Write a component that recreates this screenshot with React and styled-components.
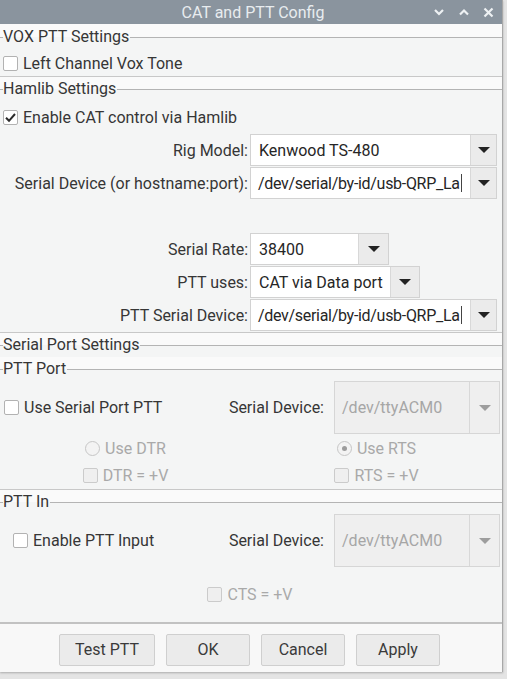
import React from 'react'
import styled, { createGlobalStyle } from 'styled-components'

const GlobalStyle = createGlobalStyle`
  html, body {
    margin: 0;
    padding: 0;
    background: #e2e2e2;
  }
  body {
    font-family: Roboto, "Liberation Sans", sans-serif;
    font-size: 16px;
    color: #363636;
  }
`

const Desktop = styled.div`
  width: 507px;
  height: 679px;
  overflow: hidden;
  display: flex;
  flex-direction: column;
  background: #e4e4e4;
`

const Window = styled.div`
  width: 502px;
  height: 672px;
  flex: none;
  display: flex;
  flex-direction: column;
  background: #f7f7f7;
  border-right: 1px solid #a8a8a8;
  box-shadow: 0 1px 2px rgba(0, 0, 0, 0.25);
`

const TitleBar = styled.div`
  height: 24px;
  flex: none;
  display: grid;
  grid-template-columns: 1fr auto 1fr;
  align-items: center;
  background: #8a949e;
  color: #e8ecef;
`

const Title = styled.div`
  grid-column: 2;
  font-size: 16px;
  padding-left: 4px;
`

const Controls = styled.div`
  grid-column: 3;
  justify-self: end;
  display: flex;
  align-items: center;
  gap: 13px;
  padding-right: 8px;
`

const ScrollArea = styled.div`
  height: 598px;
  flex: none;
  display: flex;
  flex-direction: column;
  background: #fafafa;
  border-bottom: 2px solid #c2c2c2;
  overflow: hidden;
`

const Group = styled.section`
  display: flex;
  flex-direction: column;
  background: #f4f5f5;
  border-bottom: ${p => (p.$open ? 'none' : '1px solid #c8c8c8')};
  flex: ${p => (p.$grow ? 1 : 'none')};
`

const GroupTitle = styled.div`
  height: ${p => p.$h || 24}px;
  display: flex;
  align-items: center;
  background: linear-gradient(to bottom, #fafafa 50%, #f4f5f5 50%);
  &::before {
    content: '';
    width: 3px;
    height: 1px;
    background: #b4b4b4;
  }
  &::after {
    content: '';
    flex: 1;
    height: 1px;
    background: #b4b4b4;
  }
  span {
    padding: 0 1px 0 0;
    line-height: 1;
  }
`

const Row = styled.div`
  height: ${p => p.$h}px;
  display: flex;
  align-items: center;
  padding-left: ${p => p.$pl || 0}px;
  padding-right: ${p => p.$pr || 0}px;
`

const Halves = styled.div`
  height: ${p => p.$h}px;
  display: grid;
  grid-template-columns: 1fr 1fr;
  align-items: center;
  justify-items: center;
`

const Centered = styled.div`
  flex: 1;
  display: flex;
  align-items: center;
  justify-content: center;
  padding-right: 2px;
`

const Check = styled.label`
  display: inline-flex;
  align-items: center;
  gap: 5px;
  color: ${p => (p.$disabled ? '#a9a9a9' : '#363636')};
  white-space: nowrap;
`

const Box = styled.span`
  width: 13px;
  height: 13px;
  border: 1px solid ${p => (p.$disabled ? '#cbcbcb' : '#b2b2b2')};
  background: ${p => (p.$disabled ? '#efefef' : '#ffffff')};
  border-radius: 2px;
  display: inline-flex;
  align-items: center;
  justify-content: center;
  box-sizing: content-box;
`

const Radio = styled.span`
  width: 13px;
  height: 13px;
  border: 1px solid #c6c6c6;
  border-radius: 50%;
  background: #f3f3f3;
  display: inline-flex;
  align-items: center;
  justify-content: center;
  &::after {
    content: '';
    width: 5px;
    height: 5px;
    border-radius: 50%;
    background: ${p => (p.$checked ? '#9c9c9c' : 'transparent')};
  }
`

const FormGrid = styled.div`
  display: grid;
  grid-template-columns: 248px 1fr;
  grid-auto-rows: 32px;
  column-gap: 2px;
  row-gap: 1px;
  padding-bottom: 1px;
`

const FieldLabel = styled.div`
  justify-self: end;
  align-self: center;
  white-space: nowrap;
`

const Spacer = styled.div`
  flex: 1;
`

const SideLabel = styled.div`
  margin-right: 10px;
  white-space: nowrap;
`

const Combo = styled.div`
  width: ${p => p.$w}px;
  height: ${p => p.$h || 32}px;
  box-sizing: border-box;
  display: flex;
  border: 1px solid ${p => (p.$disabled ? '#d6d6d6' : '#d2d2d2')};
  background: ${p => (p.$disabled ? '#efefef' : '#ffffff')};
  color: ${p => (p.$disabled ? '#a6a6a6' : '#262626')};
`

const ComboText = styled.div`
  flex: 1;
  min-width: 0;
  display: flex;
  align-items: center;
  padding-left: ${p => p.$pl || 8}px;
  white-space: nowrap;
  overflow: hidden;
`

const Path = styled.span`
  letter-spacing: -0.3px;
`

const Caret = styled.span`
  width: 1px;
  height: 18px;
  background: #444;
  margin-left: 1px;
`

const ComboButton = styled.div`
  width: ${p => p.$w || 24}px;
  flex: none;
  display: flex;
  align-items: center;
  justify-content: center;
  background: ${p => (p.$disabled ? '#efefef' : '#ebebeb')};
  border-left: 1px solid #d8d8d8;
  &::after {
    content: '';
    border-left: 6px solid transparent;
    border-right: 6px solid transparent;
    border-top: 6px solid ${p => (p.$disabled ? '#9d9d9d' : '#222222')};
  }
`

const ButtonBar = styled.div`
  flex: 1;
  display: flex;
  justify-content: center;
  align-items: flex-start;
  gap: 11px;
  padding-top: 10px;
  padding-right: 3px;
  background: #f8f8f8;
`

const Button = styled.button`
  width: ${p => p.$w || 84}px;
  height: 32px;
  background: #ebebeb;
  border: 1px solid #cfcfcf;
  border-radius: 2px;
  font-family: inherit;
  font-size: 16px;
  color: #3a3a3a;
  padding: 0 0 1px;
`

const Chevron = ({ up }) => (
  <svg width='12' height='8' viewBox='0 0 12 8'>
    <path d={up ? 'M2 6.5 L6 2.5 L10 6.5' : 'M2 2 L6 6 L10 2'} fill='none' stroke='#eef1f3' strokeWidth='2.2' />
  </svg>
)

const Close = () => (
  <svg width='11' height='11' viewBox='0 0 11 11'>
    <path d='M1.5 1.5 L9.5 9.5 M9.5 1.5 L1.5 9.5' stroke='#eef1f3' strokeWidth='2.2' />
  </svg>
)

const CheckMark = () => (
  <svg width='13' height='13' viewBox='0 0 13 13'>
    <path d='M2 6.8 L5 9.8 L11 3' fill='none' stroke='#2a2a2a' strokeWidth='2' />
  </svg>
)

const CheckItem = ({ label, checked, disabled }) => (
  <Check $disabled={disabled}>
    <Box $disabled={disabled}>{checked && <CheckMark />}</Box>
    <span>{label}</span>
  </Check>
)

const RadioItem = ({ label, checked }) => (
  <Check $disabled>
    <Radio $checked={checked} />
    <span>{label}</span>
  </Check>
)

const ComboBox = ({ value, w, h, disabled, editable, btn, pl }) => (
  <Combo $w={w} $h={h} $disabled={disabled}>
    <ComboText $pl={pl}>
      {editable ? <><Path>{value}</Path><Caret /></> : value}
    </ComboText>
    <ComboButton $w={btn} $disabled={disabled} />
  </Combo>
)

export default function App () {
  return (
    <Desktop>
      <GlobalStyle />
      <Window>
        <TitleBar>
          <Title>CAT and PTT Config</Title>
          <Controls>
            <Chevron />
            <Chevron up />
            <Close />
          </Controls>
        </TitleBar>
        <ScrollArea>
          <Group>
            <GroupTitle $h={26}><span>VOX PTT Settings</span></GroupTitle>
            <Row $h={26} $pl={3}>
              <CheckItem label='Left Channel Vox Tone' />
            </Row>
          </Group>

          <Group>
            <GroupTitle><span>Hamlib Settings</span></GroupTitle>
            <Row $h={33} $pl={3}>
              <CheckItem label='Enable CAT control via Hamlib' checked />
            </Row>
            <FormGrid>
              <FieldLabel>Rig Model:</FieldLabel>
              <ComboBox value='Kenwood TS-480' w={247} btn={25} />
              <FieldLabel>Serial Device (or hostname:port):</FieldLabel>
              <ComboBox value='/dev/serial/by-id/usb-QRP_La' w={247} btn={25} editable pl={7} />
              <div />
              <div />
              <FieldLabel>Serial Rate:</FieldLabel>
              <ComboBox value='38400' w={139} btn={29} />
              <FieldLabel>PTT uses:</FieldLabel>
              <ComboBox value='CAT via Data port' w={170} btn={28} />
              <FieldLabel>PTT Serial Device:</FieldLabel>
              <ComboBox value='/dev/serial/by-id/usb-QRP_La' w={247} btn={25} editable pl={7} />
            </FormGrid>
          </Group>

          <Group $open $grow>
            <GroupTitle><span>Serial Port Settings</span></GroupTitle>
            <Group>
              <GroupTitle><span>PTT Port</span></GroupTitle>
              <Row $h={53} $pl={4} $pr={2}>
                <CheckItem label='Use Serial Port PTT' />
                <Spacer />
                <SideLabel>Serial Device:</SideLabel>
                <ComboBox value='/dev/ttyACM0' w={166} h={53} btn={29} disabled pl={7} />
              </Row>
              <Halves $h={28}>
                <RadioItem label='Use DTR' />
                <RadioItem label='Use RTS' checked />
              </Halves>
              <Halves $h={27}>
                <CheckItem label='DTR = +V' disabled />
                <CheckItem label='RTS = +V' disabled />
              </Halves>
            </Group>
            <Group $open $grow>
              <GroupTitle><span>PTT In</span></GroupTitle>
              <Row $h={53} $pl={13} $pr={2}>
                <CheckItem label='Enable PTT Input' />
                <Spacer />
                <SideLabel>Serial Device:</SideLabel>
                <ComboBox value='/dev/ttyACM0' w={166} h={53} btn={29} disabled pl={7} />
              </Row>
              <Centered>
                <CheckItem label='CTS = +V' disabled />
              </Centered>
            </Group>
          </Group>
        </ScrollArea>
        <ButtonBar>
          <Button $w={96}>Test PTT</Button>
          <Button>OK</Button>
          <Button>Cancel</Button>
          <Button>Apply</Button>
        </ButtonBar>
      </Window>
    </Desktop>
  )
}
